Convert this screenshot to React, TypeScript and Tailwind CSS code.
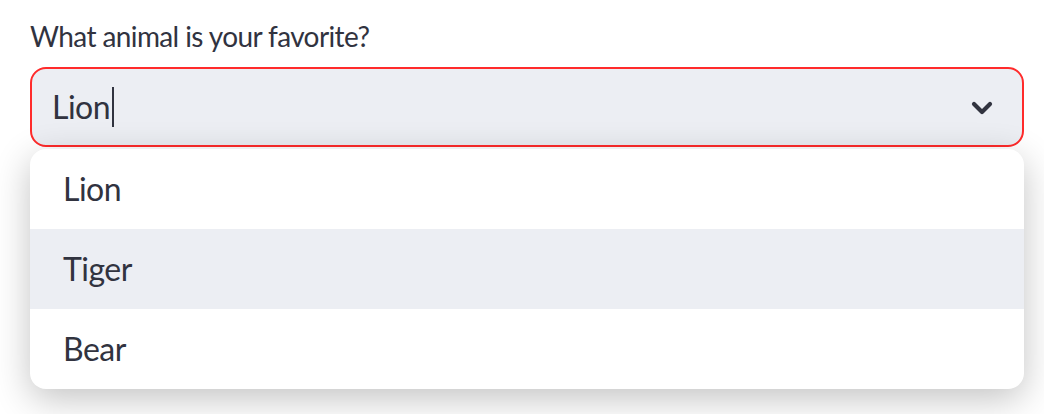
import React from "react";

export default function App() {
  return (
    <div className="w-[1044px] h-[414px] bg-white overflow-hidden" style={{ fontFamily: '"Lato", "Noto Sans", sans-serif' }}>
      <div className="pl-[30px] pr-[20px]">
        <div className="pt-[18px] h-[67px] text-[28px] leading-[36px] tracking-[-0.6px] text-[#31333f]">What animal is your favorite?</div>
        <div className="relative">
          <div className="h-[80px] rounded-[16px] border-2 border-[#ff2b2b] bg-[#eceef3] flex items-center pl-[20px] pr-[29px]">
            <span className="text-[32px] text-[#31333f] leading-none tracking-[-0.5px]">Lion</span>
            <span className="ml-[2px] w-[2px] h-[40px] bg-[#31333f]" />
            <div className="flex-1" />
            <svg width="22" height="14" viewBox="0 0 22 14" className="mt-[2px]">
              <path d="M3 3 L11 11 L19 3" fill="none" stroke="#31333f" strokeWidth="4.2" strokeLinecap="round" strokeLinejoin="round" />
            </svg>
          </div>
          <div className="absolute left-0 right-0 top-[82px] rounded-[16px] bg-white shadow-[0_10px_36px_rgba(0,0,0,0.24)] overflow-hidden">
            {["Lion", "Tiger", "Bear"].map((t, i) => (
              <div key={t} className={"h-[80px] flex items-center pl-[33px] text-[32px] tracking-[-0.5px] text-[#31333f] " + (i === 1 ? "bg-[#eceef3]" : "")}>
                {t}
              </div>
            ))}
          </div>
        </div>
      </div>
    </div>
  );
}
